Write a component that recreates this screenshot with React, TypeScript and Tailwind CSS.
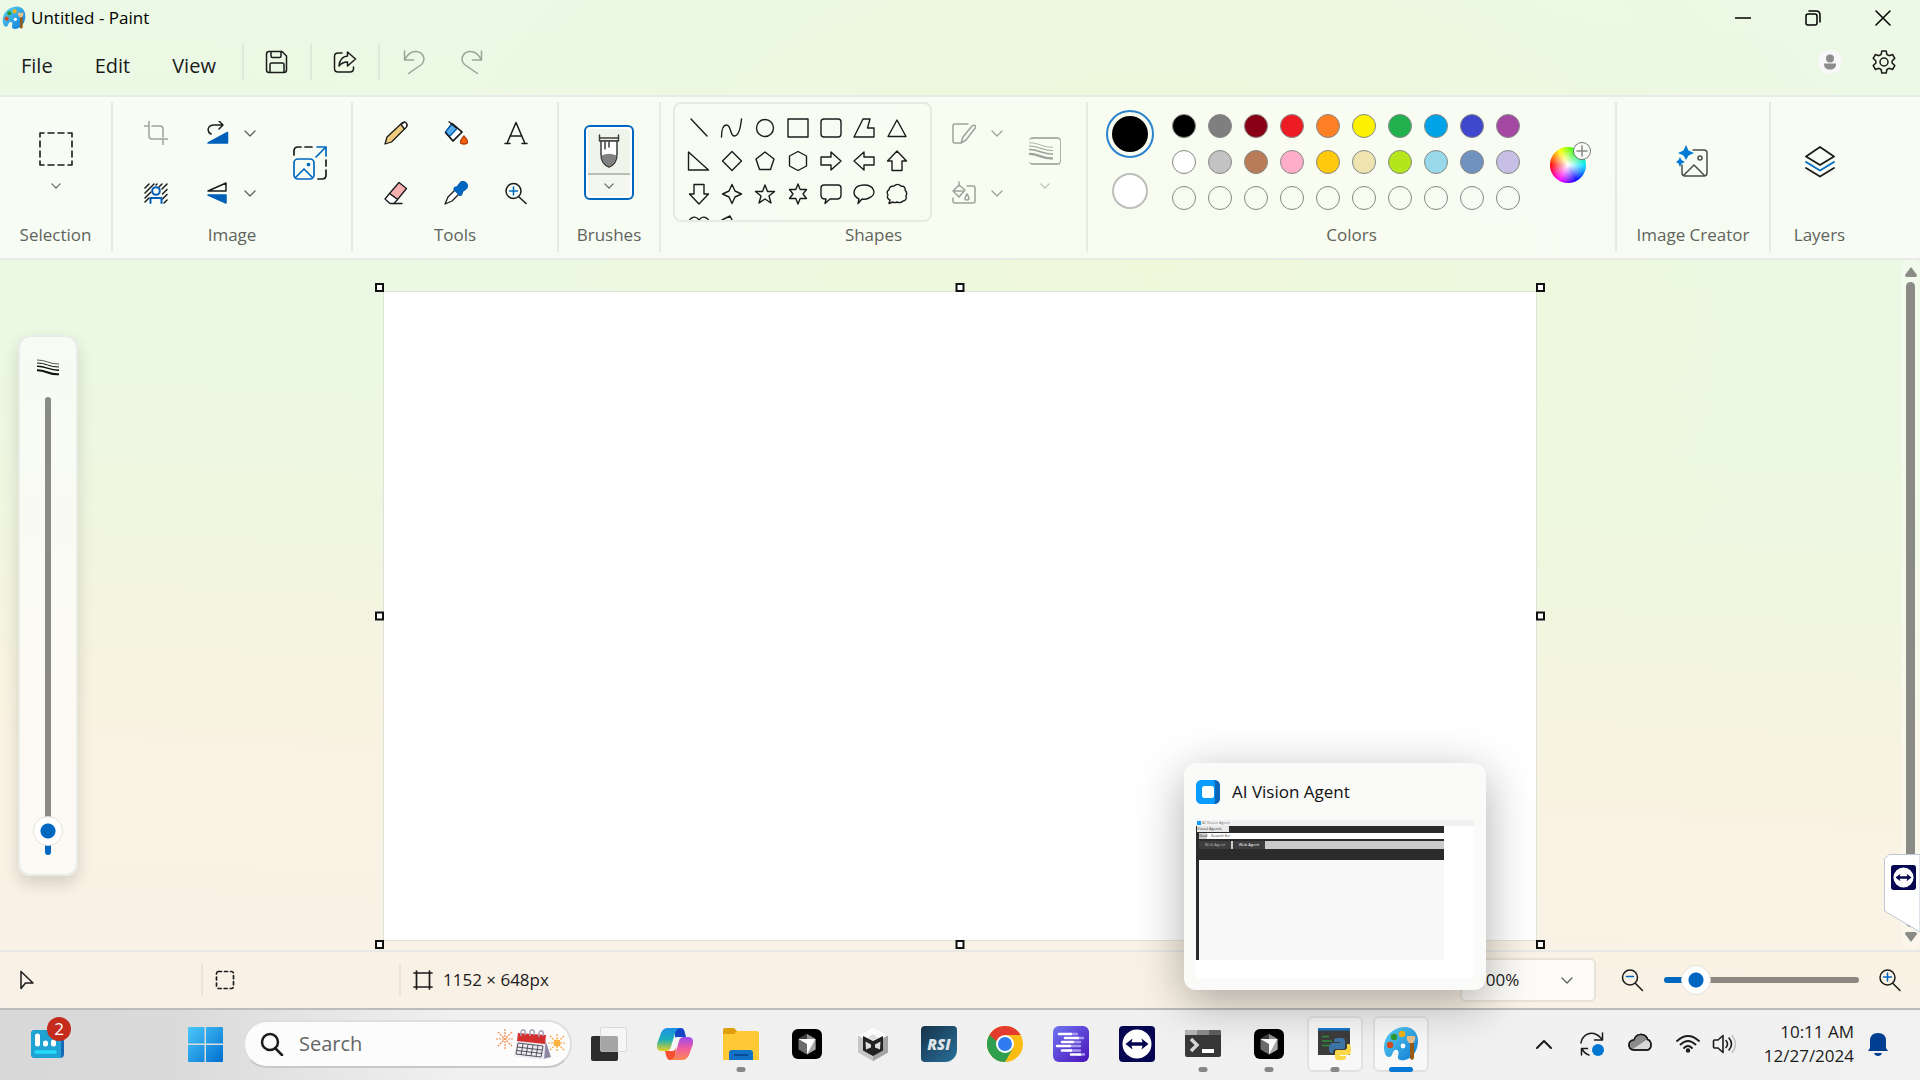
import type { ReactNode } from "react";

type IconProps = { children: ReactNode; box?: string; className?: string; stroke?: string; sw?: number };

function Svg({ children, box = "0 0 24 24", className = "size-6", stroke = "#1b1b1b", sw = 1.5 }: IconProps) {
  return (
    <svg viewBox={box} className={`shrink-0 ${className}`} fill="none" stroke={stroke} strokeWidth={sw} strokeLinecap="round" strokeLinejoin="round" aria-hidden="true">
      {children}
    </svg>
  );
}

function Chevron({ className = "h-[7px] w-3", stroke = "#5c605a" }: { className?: string; stroke?: string }) {
  return (
    <Svg box="0 0 12 7" className={className} stroke={stroke} sw={1.3}>
      <path d="M1 1l5 5 5-5" />
    </Svg>
  );
}

function PaintLogo({ className }: { className: string }) {
  return (
    <svg viewBox="0 0 36 36" className={`shrink-0 ${className}`} aria-hidden="true">
      <defs>
        <linearGradient id="pal" x1="0" y1="0" x2="1" y2="1">
          <stop offset="0" stopColor="#5fd6f5" />
          <stop offset="1" stopColor="#0a78d4" />
        </linearGradient>
      </defs>
      <path fill="url(#pal)" d="M20 1C9 2 1 11 1 21c0 6 2 10 5 10 4 0 3-6 6-7 4-1 4 3 3 6-1 4 3 5 7 4 8-2 13-10 13-19C35 6 29 0 20 1z" />
      <circle cx="7" cy="19" r="3.2" fill="#d64a1f" />
      <circle cx="11" cy="11" r="3.2" fill="#2f9b2f" />
      <circle cx="19" cy="8" r="3.2" fill="#f0b414" />
      <circle cx="20" cy="20" r="2.4" fill="#fff" />
      <path d="M27 17h4v15q-2 4-4 0z" fill="#9a5a14" />
      <path d="M24 10h8q1 4-2 7h-4q-3-3-2-7z" fill="#e8c08c" />
    </svg>
  );
}

function TeamViewerLogo({ className }: { className: string }) {
  return (
    <svg viewBox="0 0 36 36" className={`shrink-0 ${className}`} aria-hidden="true">
      <rect width="36" height="36" rx="4" fill="#06054f" />
      <circle cx="18" cy="18" r="14.5" fill="#fff" />
      <path fill="#06054f" d="M6.500 18l7-5.500-1 3.700h11l-1-3.700 7 5.500-7 5.500 1-3.700h-11l1 3.700z" />
    </svg>
  );
}

function StrokesIcon({ className, stroke }: { className: string; stroke: string }) {
  return (
    <svg viewBox="0 0 22 17" className={`shrink-0 ${className}`} fill="none" stroke={stroke} aria-hidden="true">
      <path strokeWidth="0.7" d="M0 1c8-.5 13 4.500 22 4" />
      <path strokeWidth="1" d="M0 4c8-.5 13 4.500 22 4" />
      <path strokeWidth="1.500" d="M0 7.200c8-.5 13 4.500 22 4" />
      <path strokeWidth="2.100" d="M0 11.200c8-.5 13 5 22 4" />
    </svg>
  );
}

function Group({ label, width, children, last }: { label: string; width: string; children: ReactNode; last?: boolean }) {
  return (
    <section aria-label={label} className={`flex h-[150px] shrink-0 flex-col ${width} ${last ? "" : "border-r-2 border-[#e7ebe3]"}`}>
      <div className="h-[121px]">{children}</div>
      <h2 className="text-center text-[17px] leading-6 whitespace-nowrap text-[#5f635c]">{label}</h2>
    </section>
  );
}

function Tool({ label, children, className = "" }: { label: string; children: ReactNode; className?: string }) {
  return (
    <button type="button" aria-label={label} className={`flex items-center justify-center ${className}`}>
      {children}
    </button>
  );
}

const shapes: [string, ReactNode][] = [
  ["Line", <path d="M4 3l16 17" />],
  ["Curve", <path d="M1.500 21c0-8 2-12 5-12 5 0 3 11 8 11 4 0 6-8 7-17" />],
  ["Oval", <circle cx="12" cy="12" r="8.500" />],
  ["Rectangle", <path d="M2 3h20v18H2z" />],
  ["Rounded rectangle", <rect x="2" y="3" width="20" height="18" rx="3" />],
  ["Polygon", <path d="M11 3h7l-2.500 9H22v9H2z" />],
  ["Triangle", <path d="M12 4l9 16.500H3z" />],
  ["Right triangle", <path d="M1.500 3v18h20z" />],
  ["Diamond", <path d="M12 2.500l9.500 9.500-9.500 9.500L2.500 12z" />],
  ["Pentagon", <path d="M12 3l9 7-3.500 10.500h-11L3 10z" />],
  ["Hexagon", <path d="M12 2.500l8.500 4.500v10L12 21.500 3.500 17V7z" />],
  ["Right arrow", <path d="M2 8h10V3l10 9-10 9v-5H2z" />],
  ["Left arrow", <path d="M22 8H12V3L2 12l10 9v-5h10z" />],
  ["Up arrow", <path d="M12 2l9.500 10H17v9.500H7V12H2.500z" />],
  ["Down arrow", <path d="M12 22l9.500-10H17V2.500H7V12H2.500z" />],
  ["Four-point star", <path d="M12 2.500l3 6.500 6.500 3-6.500 3-3 6.500L9 15l-6.500-3L9 9z" />],
  ["Five-point star", <path d="M12 3l2.500 6.500h7L16 14l2 7-6-4-6 4 2-7-5.500-4.500h7z" />],
  ["Six-point star", <path d="M12 2l2.200 5.500h6.300L17 12l3.500 4.500h-6.300L12 22l-2.200-5.500H3.500L7 12 3.500 7.500h6.300z" />],
  ["Rounded callout", <path d="M5 3h14q3 0 3 3v7q0 4-4 4h-7l-5 4.500 1-4.500H6q-4 0-4-4V6q0-3 3-3z" />],
  ["Oval callout", <path d="M7 17c-8-4-6-14 5-14s13 10 5 13c-2 1-5 1.500-7 1l-4 4.500z" />],
  ["Cloud callout", <path d="M5 18c-3-1-3-4-2-5-2-3 0-5 1-5 0-4 4-4 5-4 2-2 5-2 7 0 3 0 5 2 4 4 2 2 2 4 1 6 1 3-1 5-3 5-2 2-4 2-6 1-2 1-3 1-4 0l-4 1.500z" />],
  ["Heart", <path d="M12 21L3 11C-1 4 8-1 12 5c4-6 13-1 9 6z" />],
  ["Lightning", <path d="M2 5l8-4 4 8 7 12L4 9z" />],
];

const palette: [string, string][] = [
  ["Black", "bg-[#000000]"], ["Gray", "bg-[#7f7f7f]"], ["Dark red", "bg-[#880015]"], ["Red", "bg-[#ed1c24]"], ["Orange", "bg-[#ff7f27]"],
  ["Yellow", "bg-[#fff200]"], ["Green", "bg-[#22b14c]"], ["Turquoise", "bg-[#00a2e8]"], ["Indigo", "bg-[#3f48cc]"], ["Purple", "bg-[#a349a4]"],
  ["White", "bg-[#ffffff]"], ["Light gray", "bg-[#c3c3c3]"], ["Brown", "bg-[#b97a57]"], ["Rose", "bg-[#ffaec9]"], ["Gold", "bg-[#ffc90e]"],
  ["Light yellow", "bg-[#efe4b0]"], ["Lime", "bg-[#b5e61d]"], ["Light turquoise", "bg-[#99d9ea]"], ["Blue-gray", "bg-[#7092be]"], ["Lavender", "bg-[#c8bfe7]"],
  ...Array.from({ length: 10 }, (_, i): [string, string] => [`Custom color ${i + 1}`, "bg-transparent"]),
];

function TitleBar() {
  return (
    <header className="flex h-9 items-center pb-px">
      <PaintLogo className="ml-[2px] size-6" />
      <h1 className="ml-[5px] text-[17px] leading-6 text-black">Untitled - Paint</h1>
      <div className="mr-[29px] ml-auto flex items-center gap-[54px]">
        <Tool label="Minimize"><Svg box="0 0 16 16" className="size-4" stroke="#000"><path d="M0 8h16" /></Svg></Tool>
        <Tool label="Restore">
          <Svg box="0 0 16 16" className="size-4" stroke="#000"><rect x="1" y="4" width="11" height="11" rx="2" /><path d="M4 1h7q4 0 4 4v7" /></Svg>
        </Tool>
        <Tool label="Close"><Svg box="0 0 16 16" className="size-4" stroke="#000"><path d="M1 1l14 14M15 1L1 15" /></Svg></Tool>
      </div>
    </header>
  );
}

function MenuBar() {
  return (
    <nav aria-label="Menu" className="flex h-[59px] items-center pb-2 text-[20px] text-[#1b1b1b]">
      <div className="ml-[21px] flex w-[221px] gap-[42px] pt-2">
        <button type="button">File</button>
        <button type="button">Edit</button>
        <button type="button">View</button>
      </div>
      <div className="flex h-9 w-[68px] items-center justify-center border-l-2 border-[#dfe8d9]">
        <Tool label="Save">
          <Svg><path d="M4 1.500h13l4.500 4.500v14q0 2.500-2.500 2.500H4Q1.500 22.500 1.500 20V4Q1.500 1.500 4 1.500z" /><path d="M6 2v4q0 1.500 1.500 1.500h7Q16 7.500 16 6V2M5 22v-7.500q0-1.500 1.500-1.500h11q1.500 0 1.500 1.500V22" /></Svg>
        </Tool>
      </div>
      <div className="flex h-9 w-[68px] items-center justify-center border-l-2 border-[#dfe8d9]">
        <Tool label="Share">
          <Svg><path d="M9 3H5Q1.500 3 1.500 6.500v12Q1.500 22 5 22h12q3.500 0 3.500-3.500V17" /><path d="M14.500 2l8 7-8 7v-4C10 12 8 13.500 6 16c.5-6 3.500-9.500 8.500-10z" /></Svg>
        </Tool>
      </div>
      <div className="flex h-9 items-center gap-[34px] border-l-2 border-[#dfe8d9] pl-[22px]">
        <Tool label="Undo"><Svg stroke="#9ba596"><path d="M2.500 1v9h9M2.500 10c3-5 6-9 12-8.500C22 2.500 24 10 19.500 14.500L6.500 23.500" /></Svg></Tool>
        <Tool label="Redo"><Svg stroke="#9ba596"><path d="M21.500 1v9h-9M21.500 10c-3-5-6-9-12-8.500C2 2.500 0 10 4.500 14.500L17.500 23.500" /></Svg></Tool>
      </div>
      <div className="mr-6 ml-auto flex items-center gap-[30px]">
        <button type="button" aria-label="Account" className="size-6 rounded-full bg-[#f8f8f8]">
          <svg viewBox="0 0 24 24" className="size-6" fill="#8c8c8c" aria-hidden="true"><circle cx="12" cy="8.500" r="4" /><path d="M6 13.500h12c0 4-2 6-6 6s-6-2-6-6z" /></svg>
        </button>
        <Tool label="Settings">
          <Svg><circle cx="12" cy="12" r="4" /><path d="M9.800 1h4.400l.7 3.500 2.200 1.200 3.400-1.200 2.300 3.900L20.100 11v2l2.700 2.600-2.300 3.900-3.400-1.200-2.200 1.200-.7 3.500H9.800l-.7-3.500-2.200-1.200-3.400 1.200-2.300-3.900L3.900 13v-2L1.200 8.400l2.300-3.900 3.400 1.200 2.200-1.200z" /></Svg>
        </Tool>
      </div>
    </nav>
  );
}

function Ribbon() {
  return (
    <div role="toolbar" aria-label="Ribbon" className="flex h-[165px] items-start border-y-2 border-[#eaeae9] bg-white/60 pt-[5px]">
      <Group label="Selection" width="w-[113px]">
        <button type="button" aria-label="Selection tool" className="flex w-full flex-col items-center gap-[17px] pt-[30px]">
          <Svg box="0 0 34 34" className="size-[34px]" sw={1.6}><path d="M1 5V1h4M29 1h4v4M33 29v4h-4M5 33H1v-4M9 1h6M19 1h6M9 33h6M19 33h6M1 9v6M1 19v6M33 9v6M33 19v6" /></Svg>
          <Chevron className="h-[6px] w-[10px]" />
        </button>
      </Group>

      <Group label="Image" width="w-[240px]">
        <div className="grid grid-cols-[60px_90px_68px] grid-rows-[60px_60px] pt-px pl-[13px]">
          <Tool label="Crop"><Svg stroke="#9da39a"><path d="M5 0v15q0 3 3 3h16M0 5h5M8 5h8q3 0 3 3v8M19 19v5" /></Svg></Tool>
          <div className="flex items-center justify-center gap-[14px]">
            <Tool label="Rotate"><Svg><path d="M21.500 11.500V22H2z" fill="#0060b8" stroke="#0060b8" /><path d="M5 13C0 10 2 4 8 4h9M13 0l4 4-4 4" /></Svg></Tool>
            <Tool label="Rotate options"><Chevron /></Tool>
          </div>
          <Tool label="Resize" className="row-span-2">
            <Svg box="0 0 34 34" className="size-[34px]" sw={1.7}>
              <path d="M1 9V5q0-4 4-4h3M12 1h7M33 14v6M33 24v5q0 4-4 4h-4" />
              <g stroke="#0067c0"><path d="M24 1h9v9M33 1L23 11" /><rect x="1" y="13" width="20" height="20" rx="4" /><path d="M3 31l8-8 8 8" /><circle cx="15.500" cy="18.500" r="1" fill="#0067c0" /></g>
            </Svg>
          </Tool>
          <Tool label="Remove background">
            <Svg sw={1.5}><path d="M1 7l4-4M1 12l9-9M1 17l6-6M1 21l4-4M12 4l1-1M15 6l3-3M18 8l5-5M18.500 13l4.500-4.500M18.500 18l4.500-4.500M20 22l3-3" /><g stroke="#0060b8" strokeWidth="2"><circle cx="12" cy="10" r="3.800" /><path d="M6.500 22v-5h11v5" /></g></Svg>
          </Tool>
          <div className="flex items-center justify-center gap-[14px]">
            <Tool label="Flip"><Svg><path d="M20 2v8H2z" /><path d="M20 22v-8H2z" fill="#0060b8" stroke="#0060b8" /></Svg></Tool>
            <Tool label="Flip options"><Chevron /></Tool>
          </div>
        </div>
      </Group>

      <Group label="Tools" width="w-[206px]">
        <div className="grid grid-cols-[60px_60px_60px] grid-rows-[60px_60px] pt-px pl-[13px]">
          <Tool label="Pencil"><Svg sw={1.3}><path d="M1 23l2-7L18 2q3-2 4.500.5T21.500 7L7.500 21z" fill="#f0cd7e" /><path d="M17 3.500q4-4 5.500-1T20.500 8z" fill="#fff" /></Svg></Tool>
          <Tool label="Fill"><Svg sw={1.3}><path d="M8 2.500l10 8.500-9 9-7.500-8.500z" fill="#fff" /><path d="M8 3l-6.500 8 4 4.500 8-8.500z" fill="#5aaef0" stroke="#0060b8" /><path d="M5 .8l7 6M8 2.500l10 8.500-9 9-7.500-8.500" /><path d="M20 15q7 8 0 8t0-8z" fill="#f7630c" stroke="#b43c08" /></Svg></Tool>
          <Tool label="Text"><Svg><path d="M3 22.500L12 1.500l9 21M6 15h12M1 22.500h5M18 22.500h5" /></Svg></Tool>
          <Tool label="Eraser"><Svg sw={1.3}><path d="M15 1.500l7.500 6-9 11-8-6z" fill="#f7b0b0" /><path d="M5.500 12.500l8 6-3.500 4H6L1 18z" fill="#fff" /><path d="M10 22.500h8" /></Svg></Tool>
          <Tool label="Color picker"><Svg sw={1.3}><path d="M12 8L4 16 1 23l7-3 8-8z" fill="#fff" /><path d="M10.500 6.500l3-1 3-4q3-2 5.500.5t.5 5.500l-4 3-1 3.500-1.500.5-6-6z" fill="#0067c0" stroke="#0060b8" /></Svg></Tool>
          <Tool label="Magnifier"><Svg><circle cx="9.500" cy="10" r="7.500" /><path d="M15 16l7 6.500" /><path d="M9.500 6v8M5.500 10h8" stroke="#0067c0" /></Svg></Tool>
        </div>
      </Group>

      <Group label="Brushes" width="w-[102px]">
        <div className="flex justify-center pt-[23px]">
          <button type="button" aria-label="Brushes" className="flex h-[75px] w-[50px] flex-col items-center rounded-md border-2 border-[#0067c0] bg-white p-[2px]">
            <span className="flex h-[46px] w-full items-center justify-center rounded-t-sm border-b-2 border-[#b9bdb6] bg-[#f0f5ec]">
              <Svg box="0 0 22 34" className="h-[34px] w-[22px]" stroke="#3c3c3c"><path d="M1.500 1v6h19V1M1.500 4h19" /><path d="M3 7v13c0 6 3 11 8 13 5-2 8-7 8-13V7z" fill="#fff" /><path d="M3.500 21.500q7.500-3.500 15 0-1 8-7.500 11-6.500-3-7.500-11z" fill="#808080" stroke="none" /><path d="M7 8v7M11 8v5" /></Svg>
            </span>
            <span className="flex w-full flex-1 items-center justify-center rounded-b-sm bg-[#f3f7f0]"><Chevron className="h-[6px] w-[10px]" /></span>
          </button>
        </div>
      </Group>

      <Group label="Shapes" width="w-[427px]">
        <div className="flex pl-3">
          <div className="grid h-[120px] w-[259px] grid-cols-[repeat(7,33px)] auto-rows-[33px] overflow-hidden rounded-lg border-2 border-[#e7ebe2] pt-[7px] pl-[7px]">
            {shapes.map(([name, d]) => (
              <Tool key={name} label={name}><Svg className="size-6" sw={1.4}>{d}</Svg></Tool>
            ))}
          </div>
          <div className="ml-5 grid grid-rows-[60px_60px] pt-px">
            <div className="flex items-center gap-[15px]">
              <Tool label="Shape outline"><Svg stroke="#9da39a"><path d="M16 3H3Q1 3 1 5v15q0 2 2 2h5M9 22l2-6L20 5q3-2 4 1l-10 13z" /></Svg></Tool>
              <Tool label="Shape outline options"><Chevron stroke="#9da39a" /></Tool>
            </div>
            <div className="flex items-center gap-[15px]">
              <Tool label="Shape fill"><Svg stroke="#9da39a"><path d="M15 5h6q2 0 2 2v13q0 2-2 2H3q-2 0-2-2v-3M7 1v4M7 4l6 5-6 7-6-6zM1 10h11M15 13q4 6 0 6t0-6z" /></Svg></Tool>
              <Tool label="Shape fill options"><Chevron stroke="#9da39a" /></Tool>
            </div>
          </div>
          <button type="button" aria-label="Size" className="ml-[26px] flex h-[94px] flex-col items-center gap-[18px] pt-[35px]">
            <span className="flex h-7 w-8 items-center rounded-sm border-t-2 border-r-1 border-b-2 border-[#aeb3aa]"><StrokesIcon className="h-5 w-6" stroke="#9da39a" /></span>
            <Chevron className="h-[6px] w-[10px]" stroke="#b6bcb2" />
          </button>
        </div>
      </Group>

      <Group label="Colors" width="w-[529px]">
        <div className="flex pl-[18px]">
          <div className="flex w-12 flex-col items-center gap-[15px] pt-2">
            <button type="button" aria-label="Color 1, black" className="flex size-12 items-center justify-center rounded-full border-2 border-[#2b83cf]"><span className="size-9 rounded-full bg-black" /></button>
            <button type="button" aria-label="Color 2, white" className="size-9 rounded-full border-2 border-[#bcbfba] bg-white" />
          </div>
          <div className="ml-[18px] grid grid-cols-[repeat(10,24px)] gap-3 pt-3">
            {palette.map(([name, bg]) => (
              <button key={name} type="button" aria-label={name} className={`size-6 rounded-full border border-[#858985] ${bg}`} />
            ))}
          </div>
          <button type="button" aria-label="Edit colors" className="relative mt-[45px] ml-[30px] size-9 rounded-full bg-[radial-gradient(circle,#fff_0%,transparent_70%),conic-gradient(from_90deg,#00e5ff,#0000ff,#ff00ff,#ff0000,#ffff00,#00ff00,#00e5ff)]">
            <span className="absolute -top-[5px] -right-[5px] flex size-[18px] items-center justify-center rounded-full border border-[#777] bg-[#f9fcf6]">
              <Svg box="0 0 12 12" className="size-3" stroke="#888"><path d="M6 1v10M1 6h10" /></Svg>
            </span>
          </button>
        </div>
      </Group>

      <Group label="Image Creator" width="w-[154px]">
        <div className="flex h-full items-center justify-center pr-[2px] pb-1">
          <Tool label="Open Image Creator">
            <Svg box="0 0 32 32" className="size-8" stroke="#4a4d48"><path d="M17 5h11q3 0 3 3v20q0 3-3 3H9q-3 0-3-3v-8M8 30l10-10 10 10" /><circle cx="24" cy="13" r="2" /><path fill="#0078d4" stroke="none" d="M10 0l2.500 5.500L18 8l-5.500 2.500L10 15l-2.500-4.500L2 8l5.500-2.500zM4 12l1.500 3L9 17l-3.500 1.500L4 22l-1.500-3.500L0 17l2.500-2z" /></Svg>
          </Tool>
        </div>
      </Group>

      <Group label="Layers" width="w-[97px]" last>
        <div className="flex h-full items-center justify-center pb-px">
          <Tool label="Show layers">
            <Svg box="0 0 32 32" className="size-8" sw={1.8}><path d="M16 1l14 9.500L16 19 2 10.500z" /><path d="M2 16l14 8.500L30 16" stroke="#0067c0" /><path d="M2 22l14 8.500L30 22" /></Svg>
          </Tool>
        </div>
      </Group>
    </div>
  );
}

const handles = [
  "-top-[9px] -left-[9px]", "-top-[9px] left-1/2 -translate-x-1/2", "-top-[9px] -right-[9px]",
  "top-1/2 -left-[9px] -translate-y-1/2", "top-1/2 -right-[9px] -translate-y-1/2",
  "-bottom-[9px] -left-[9px]", "-bottom-[9px] left-1/2 -translate-x-1/2", "-right-[9px] -bottom-[9px]",
];

function Workspace() {
  return (
    <main className="relative flex min-h-[690px] flex-1 items-start">
      <div className="absolute top-[75px] left-[18px] flex h-[541px] w-[60px] flex-col items-center rounded-xl border-2 border-[#e9ebe8] bg-white/60 pt-[22px] shadow-[0_8px_16px_rgba(0,0,0,0.14)]">
        <StrokesIcon className="h-[17px] w-[22px]" stroke="#111" />
        <input
          type="range" aria-label="Brush size" min={0} max={100} defaultValue={2}
          className="mt-[21px] h-[458px] w-[30px] appearance-none bg-transparent [direction:rtl] [writing-mode:vertical-lr] [&::-webkit-slider-runnable-track]:h-full [&::-webkit-slider-runnable-track]:w-[6px] [&::-webkit-slider-runnable-track]:rounded-full [&::-webkit-slider-runnable-track]:bg-[linear-gradient(to_top,#0067c0_5%,#8a8b85_5%)] [&::-webkit-slider-thumb]:-ml-3 [&::-webkit-slider-thumb]:size-[30px] [&::-webkit-slider-thumb]:appearance-none [&::-webkit-slider-thumb]:rounded-full [&::-webkit-slider-thumb]:border [&::-webkit-slider-thumb]:border-[#e6e2da] [&::-webkit-slider-thumb]:bg-[radial-gradient(circle,#0067c0_7px,#fff_8px)]"
        />
      </div>

      <div className="relative mx-auto mt-8 h-[648px] w-[1152px] bg-white outline-1 outline-[#e0e4d8]">
        {handles.map((pos) => (
          <span key={pos} className={`absolute size-[9px] border-2 border-[#111] bg-white ${pos}`} />
        ))}
      </div>

      <div className="absolute inset-y-0 right-0 flex w-[19px] flex-col items-center rounded-lg bg-white/30 pt-[7px] pb-2">
        <svg viewBox="0 0 12 10" className="h-[10px] w-3" fill="#8a8a86" aria-hidden="true"><path d="M6 0l6 8q0 2-2 2H2Q0 10 0 8z" /></svg>
        <span className="my-[5px] w-[9px] flex-1 rounded-full bg-[#8a8a86]" />
        <svg viewBox="0 0 12 10" className="h-[10px] w-3" fill="#8a8a86" aria-hidden="true"><path d="M6 10L0 2Q0 0 2 0h8q2 0 2 2z" /></svg>
      </div>
      <button type="button" aria-label="TeamViewer panel" className="absolute right-0 bottom-[18px] h-[78px] w-9">
        <svg viewBox="0 0 36 78" className="absolute inset-0 h-full w-full" aria-hidden="true"><path d="M36 .5H5L.5 5v52L36 78z" fill="#fff" stroke="#bcc8d8" /></svg>
        <TeamViewerLogo className="absolute top-[11px] left-[7px] size-[25px]" />
      </button>
    </main>
  );
}

function StatusBar() {
  return (
    <footer className="flex h-[58px] items-center border-t-2 border-[#e9e8e8] text-[17px] leading-6 text-[#1b1b1b]">
      <div className="flex w-[201px] items-center pl-[18px]">
        <Svg box="0 0 18 20" className="h-5 w-[18px]"><path d="M3 1.500v17l4.500-5.500H15z" /></Svg>
      </div>
      <div className="flex h-8 w-[198px] items-center border-l-2 border-[#ece4da] pl-3">
        <Svg box="0 0 20 20" className="size-5" sw={1.7}><rect x="1.500" y="1.500" width="17" height="17" rx="2" strokeDasharray="3 3" /></Svg>
      </div>
      <div className="flex h-8 items-center gap-[10px] border-l-2 border-[#ece4da] pl-3">
        <Svg box="0 0 20 20" className="size-5" sw={1.7}><path d="M3.500 1v18M16.500 1v18M1 3h18M1 17h18" /></Svg>
        <span>1152 × 648px</span>
      </div>
      <div className="mr-[18px] ml-auto flex items-center">
        <div className="relative">
          <select aria-label="Zoom level" defaultValue="100%" className="h-[44px] w-[136px] appearance-none rounded-md border-2 border-[#e8e2d9] bg-[#fdfbf8] pl-[14px] text-[17px]">
            <option>50%</option>
            <option>100%</option>
            <option>200%</option>
          </select>
          <span className="pointer-events-none absolute top-[19px] right-[23px]"><Chevron /></span>
        </div>
        <Tool label="Zoom out" className="ml-6"><Svg><circle cx="10" cy="9.500" r="7.500" /><path d="M15.500 15.500l7 7" /><path d="M6.500 8.500h7" stroke="#0067c0" /></Svg></Tool>
        <input
          type="range" aria-label="Zoom" min={0} max={100} defaultValue={10}
          className="mr-[19px] ml-5 h-[30px] w-[195px] appearance-none bg-transparent [&::-webkit-slider-runnable-track]:h-[6px] [&::-webkit-slider-runnable-track]:rounded-full [&::-webkit-slider-runnable-track]:bg-[linear-gradient(to_right,#0067c0_15%,#8a8780_15%)] [&::-webkit-slider-thumb]:-mt-3 [&::-webkit-slider-thumb]:size-[30px] [&::-webkit-slider-thumb]:appearance-none [&::-webkit-slider-thumb]:rounded-full [&::-webkit-slider-thumb]:border [&::-webkit-slider-thumb]:border-[#e6e0d8] [&::-webkit-slider-thumb]:bg-[radial-gradient(circle,#0067c0_7px,#fff_8px)]"
        />
        <Tool label="Zoom in"><Svg><circle cx="9.500" cy="9.500" r="7.500" /><path d="M15 15.500l7 7" /><path d="M9.500 5v8M5.500 9h8" stroke="#0067c0" /></Svg></Tool>
      </div>
    </footer>
  );
}

function CursorCube() {
  return (
    <svg viewBox="0 0 36 36" className="size-9" aria-hidden="true">
      <rect x="3" y="3" width="30" height="30" rx="6" fill="#000" />
      <path d="M18 8l8.500 5v10.500L18 28.500l-8.500-5V13z" fill="#6c6c6c" />
      <path d="M18 8l8.500 5h-17z" fill="#8f8f8f" />
      <path d="M18 8v5H9.500z" fill="#3c3c3c" />
      <path d="M26.500 13v10.500L18 28.500z" fill="#a8a8a8" />
      <path d="M9.500 13h17L18 28.500V18z" fill="#fff" />
    </svg>
  );
}

const apps: { name: string; running?: boolean; active?: boolean; icon: ReactNode }[] = [
  {
    name: "Task view",
    icon: <svg viewBox="0 0 36 36" className="size-9" aria-hidden="true"><rect y="10" width="27" height="25" rx="2" fill="#2d2d2d" /><rect x="9.500" y="1.500" width="26" height="24" rx="1.500" fill="#f6f6f6" stroke="#cfcfcf" strokeWidth=".7" /><path d="M9.500 10H25q2 0 2 2v13.500H11q-1.500 0-1.500-1.500z" fill="#a6a6a6" /></svg>,
  },
  {
    name: "Copilot",
    icon: (
      <svg viewBox="0 0 36 36" className="size-9" aria-hidden="true">
        <defs>
          <linearGradient id="cpa" x1="0" y1="0" x2="0" y2="1"><stop offset="0" stopColor="#1c8fe8" /><stop offset=".5" stopColor="#1cb0b8" /><stop offset="1" stopColor="#e8d020" /></linearGradient>
          <linearGradient id="cpb" x1="0" y1="0" x2="0" y2="1"><stop offset="0" stopColor="#9a4cf0" /><stop offset=".5" stopColor="#f05c9c" /><stop offset="1" stopColor="#fa8a50" /></linearGradient>
        </defs>
        <path d="M18 2h6q3 0 4 5l1 4h-6q-4 0-5 4z" fill="#1546c8" />
        <path d="M18 34h-5q-3 0-4-5l-1-4h6q4 0 5-4z" fill="#f5502f" />
        <path d="M11 2h12q-4 1-5 5l-4 14q-1 4-5 4H5q-6 0-5-7L4 7q2-5 7-5z" fill="url(#cpa)" />
        <path d="M25 34H13q4-1 5-5l4-14q1-4 5-4h4q6 0 5 7l-4 11q-2 5-7 5z" fill="url(#cpb)" />
        <path d="M22 11h-2q-3 0-4 4l-3 10h2q3 0 4-4z" fill="#f6f6f8" />
      </svg>
    ),
  },
  {
    name: "File Explorer", running: true,
    icon: <svg viewBox="0 0 36 36" className="size-9" aria-hidden="true"><path d="M0 4q0-2 2-2h9l4 4v8H0z" fill="#e0a00c" /><path d="M0 8h11l3-3h20q2 0 2 2v27H0z" fill="#fdc935" /><path d="M6 34V27q0-3 3-3h18q3 0 3 3v7z" fill="#1272c8" /><path d="M11 29h14" stroke="#0a4a94" strokeWidth="2" /></svg>,
  },
  { name: "Cursor", icon: <CursorCube /> },
  {
    name: "Unity Hub",
    icon: <svg viewBox="0 0 36 36" className="size-9" aria-hidden="true"><path d="M18 1l15 8.500v17L18 35 3 26.500v-17z" fill="#c6c6c6" /><path d="M18 1l15 8.500L18 18 3 9.500z" fill="#fbfbfb" /><path d="M18 18l15-8.500v17L18 35z" fill="#a4a4a4" /><path d="M18 15l10-5v14.500L18 30 8 24.500V10z" fill="#222" /><path d="M18 8l5 3.500-5 3-5-3zM10.500 15.500l5.500 3v3l-5 2zM25.500 15.500l-5.500 3v3l5 2z" fill="#dedede" /></svg>,
  },
  {
    name: "RSI Launcher",
    icon: <span className="flex size-9 items-center justify-center rounded-sm rounded-br-xl bg-linear-to-br from-[#17344a] to-[#27709c] text-[15px] leading-4 font-extrabold text-[#dfe3e6] italic">RSI</span>,
  },
  {
    name: "Chrome",
    icon: <svg viewBox="0 0 36 36" className="size-9" aria-hidden="true"><circle cx="18" cy="18" r="18" fill="#fbbc16" /><path d="M18 18V9h15.600A18 18 0 0 0 2.400 9l7.800 13.500z" fill="#e33b2e" /><path d="M2.400 9A18 18 0 0 0 18 36l7.800-13.500H18z" fill="#2f9e4f" /><circle cx="18" cy="18" r="9" fill="#fff" /><circle cx="18" cy="18" r="7" fill="#2f7cf0" /></svg>,
  },
  {
    name: "Speech editor",
    icon: (
      <svg viewBox="0 0 36 36" className="size-9" aria-hidden="true">
        <defs><linearGradient id="pur" x1="0" y1="0" x2="1" y2="1"><stop offset="0" stopColor="#6f74f2" /><stop offset="1" stopColor="#4a12b8" /></linearGradient></defs>
        <rect width="36" height="36" rx="6" fill="url(#pur)" />
        <path d="M16 8h8M22 12h8M18 16h9M15 20h12M15 24.500h12M26 28.500h5" stroke="#a79bf0" strokeWidth="2.400" strokeLinecap="round" />
        <path d="M6 8h12M12 12h13M9 16h11M4 20h13M9 24.500h9M18 28.500h9" stroke="#fff" strokeWidth="2.600" strokeLinecap="round" />
      </svg>
    ),
  },
  { name: "TeamViewer", icon: <TeamViewerLogo className="size-9" /> },
  {
    name: "Terminal", running: true,
    icon: <svg viewBox="0 0 36 36" className="size-9" aria-hidden="true"><rect y="4" width="36" height="27" rx="2" fill="#383838" /><path d="M0 9V6q0-2 2-2h10v5z" fill="#b5b5b5" /><path d="M12 4h12v5H12z" fill="#8c8c8c" /><path d="M24 4h10q2 0 2 2v3H24z" fill="#5f5f5f" /><path d="M6 13l6 6-6 6" fill="none" stroke="#d6d6d6" strokeWidth="3.500" /><path d="M17 25h12" stroke="#fff" strokeWidth="4" /></svg>,
  },
  { name: "Cursor window", running: true, icon: <CursorCube /> },
  {
    name: "Python", running: true, active: true,
    icon: (
      <svg viewBox="0 0 36 36" className="size-9" aria-hidden="true">
        <path d="M1 2h32v27H1z" fill="#3c3c3c" /><path d="M1 2h32v2.500H1z" fill="#1478c8" /><path d="M5 10.500h7M5 15h10M5 19.500h8" stroke="#2f8f3a" strokeWidth="1.300" />
        <path d="M22 12q6-1 6 3v6q0 2-2 2h-7q-3 0-3 3v1h-2q-2-1-2-5t3-5h8v-1h-6v-2q0-2 5-2z" fill="#3d75a8" />
        <path d="M24 34q-6 1-6-3v-5q0-2 2-2h7q3 0 3-3v-3h2q2 1 2 6t-3 5h-8v1h6v2q0 2-5 2z" fill="#fbd84a" />
      </svg>
    ),
  },
  { name: "Paint", running: true, active: true, icon: <PaintLogo className="size-9" /> },
];

function WindowPreview() {
  return (
    <div className="absolute bottom-[82px] left-1/2 z-10 h-[227px] w-[302px] -translate-x-1/2 rounded-xl bg-[#fafaf9] px-3 pt-[17px] pb-3 shadow-[0_12px_48px_rgba(0,0,0,0.32)]">
      <div className="flex h-6 items-center gap-3">
        <svg viewBox="0 0 24 24" className="size-6" aria-hidden="true"><rect width="24" height="24" rx="6" fill="#0a9bff" /><path d="M18 0q6 0 6 6v12q0 6-6 6V0z" fill="#0b66b8" /><path d="M6 0h10q3 0 3 4v16q0 4-3 4H6q-6 0-6-6V6q0-6 6-6z" fill="#0a9bff" /><rect x="6" y="6" width="12" height="12" rx="2.500" fill="#fff" /></svg>
        <span className="text-[17px] leading-6 text-[#111]">AI Vision Agent</span>
      </div>
      <div className="mt-4 h-[158px] overflow-hidden bg-white text-[4px] leading-[6px]">
        <div className="flex h-[6px] items-center gap-px bg-[#f1f1f1] text-[#777]"><span className="ml-px size-1 bg-[#0a9bff]" />AI Vision Agent</div>
        <div className="mr-[30px] h-[134px] bg-[#2b2b2b] pl-[3px]">
          <div className="-ml-[2px] h-[6px] w-8 bg-[#e8e8e8] text-[#333]">Visual Agents</div>
          <div className="mt-px flex h-[6px] bg-white text-[#333]"><span className="mr-1 w-2 bg-[#cfcfcf]">Goal</span>Search for</div>
          <div className="mt-[2px] flex h-2 items-center gap-[2px] bg-[#cbcbcb] text-center text-[#bbb]">
            <span className="h-2 w-[32px] bg-[#3d3d3d] leading-2">Web Agent</span>
            <span className="h-2 w-[32px] bg-[#3d3d3d] leading-2 text-white">Web Agent</span>
          </div>
          <div className="mt-[11px] h-[100px] bg-[#f8f8f8]" />
        </div>
      </div>
    </div>
  );
}

function Taskbar() {
  return (
    <div role="navigation" aria-label="Taskbar" className="flex h-[72px] items-center border-t-2 border-[#bcbcbc] bg-[linear-gradient(to_right,#d8d8d8_0%,#dadada_9%,#f0f0f0_24%,#f1f1f1_100%)] pb-[2px] text-[#1b1b1b]">
      <button type="button" aria-label="Widgets, 2 new" className="relative ml-[31px] h-7 w-[34px]">
        <svg viewBox="0 0 34 28" className="h-7 w-[34px]" aria-hidden="true"><rect width="33" height="28" rx="4" fill="#1868b4" /><path d="M4 0h26v28H4q-4 0-4-4V4q0-4 4-4z" fill="#1fa2d4" /><path d="M6.500 6v8M14.500 13v1M22.500 12v2" stroke="#fff" strokeWidth="5" strokeLinecap="round" /><path d="M5 22h19" stroke="#22dcf6" strokeWidth="3.500" strokeLinecap="round" /></svg>
        <span className="absolute -top-[13px] left-4 flex size-6 items-center justify-center rounded-full bg-[#c42b1c] text-[17px] leading-6 text-white">2</span>
      </button>
      <button type="button" aria-label="Start" className="ml-[123px]">
        <svg viewBox="0 0 35 35" className="size-[35px]" aria-hidden="true">
          <defs><linearGradient id="win" gradientUnits="userSpaceOnUse" x1="0" y1="0" x2="35" y2="35"><stop offset="0" stopColor="#4cc8fa" /><stop offset="1" stopColor="#006fd0" /></linearGradient></defs>
          <path fill="url(#win)" d="M0 1q0-1 1-1h15.500v16.500H0zM18 0h16q1 0 1 1v15.500H18zM0 18h16.500v17H1q-1 0-1-1zM18 18h17v16q0 1-1 1H18z" />
        </svg>
      </button>
      <label className="ml-5 flex h-12 w-[329px] items-center rounded-full border-2 border-[#dedede] border-b-[#c8c8c8] bg-[#fcfcfc] pr-1 pl-[15px]">
        <Svg className="size-6" sw={2.5}><circle cx="10" cy="10" r="8" /><path d="M16 17l6 6" /></Svg>
        <input type="search" aria-label="Search" placeholder="Search" className="ml-[15px] w-[190px] bg-transparent text-[20px] leading-6 outline-none placeholder:text-[#666]" />
        <svg viewBox="0 0 70 32" className="ml-auto h-8 w-[70px]" aria-hidden="true">
          <g stroke="#f08a4b" strokeWidth="1.200" strokeDasharray="2 1"><path d="M9 1v20M0 11h18M2 4l14 14M16 4L2 18" /></g>
          <g stroke="#f4a03a" strokeWidth="1.200" strokeDasharray="2 1"><path d="M61 6v18M52 15h18M54 8l14 14M68 8L54 22" /></g>
          <circle cx="61" cy="15" r="3.500" fill="#fbb13c" />
          <path d="M48 8l7 21-8 2z" fill="#8d88a0" />
          <path d="M22 6l28 3-2 23-30-4z" fill="#eceaf4" /><path d="M22 5l28 2-1 9-28-3z" fill="#d42f2f" />
          <g stroke="#444" strokeWidth=".9" fill="none"><path d="M22 15l25 3-2 11-25-3zM21 19l25 3M21 22.500l25 3M27 16l-2 11M32 16.500l-2 11M37 17l-2 11M42 17.500l-2 11" /></g>
          <g stroke="#a9a4b8" strokeWidth="1.500" fill="none"><path d="M25 8q-1-7 3-6 2 1 1 5M34 8q-1-7 3-6 2 1 1 5M43 9q-1-7 3-6 2 1 1 5" /></g>
        </svg>
      </label>
      <div className="ml-[9px] flex gap-[10px]">
        {apps.map((app) => (
          <div key={app.name} className="relative">
            <button type="button" aria-label={app.name} className={`flex h-14 w-14 items-center justify-center rounded-md ${app.active ? "border-2 border-[#e2e2e2] bg-white/50" : ""}`}>
              {app.icon}
            </button>
            {app.running && <span className={`absolute bottom-0 left-1/2 h-[5px] -translate-x-1/2 rounded-full ${app.name === "Paint" ? "w-6 bg-[#0078d4]" : "w-[9px] bg-[#868686]"}`} />}
            {app.name === "Python" && <WindowPreview />}
          </div>
        ))}
      </div>
      <div className="mr-[30px] ml-auto flex items-center">
        <Tool label="Show hidden icons"><Svg box="0 0 16 10" className="h-[10px] w-4" sw={2}><path d="M1 9l7-7 7 7" /></Svg></Tool>
        <Tool label="Update" className="ml-7"><Svg><path d="M1 11C2 4 8 0 14 1.500q5 1.500 8 6M22.500 1v7h-8M9 23q-4-1-7-6M1.500 23v-6.500h6" /><circle cx="18" cy="18" r="6" fill="#0078d4" stroke="none" /></Svg></Tool>
        <Tool label="OneDrive" className="ml-6 pb-1"><Svg><path d="M6 20q-5-.5-5-5t5-5q2-6 7.500-5.500 5 .5 6 5Q23 10.500 23 15t-4 5z" fill="#d9d9d9" /><path d="M2 17q-1-6 4-7 2-6 7.500-5.500 4 .5 5.500 5L5 19z" fill="#8c8c8c" stroke="none" /><path d="M6 20q-5-.5-5-5t5-5q2-6 7.500-5.500 5 .5 6 5Q23 10.500 23 15t-4 5z" /></Svg></Tool>
        <button type="button" aria-label="Network and volume" className="ml-6 flex gap-3">
          <Svg sw={1.8}><path d="M1 9q11-10 22 0M4.500 12.500q7.500-7 15 0M8 16q4-4 8 0" /><circle cx="12" cy="18.500" r="1.300" fill="#1b1b1b" /></Svg>
          <Svg sw={1.6}><path d="M1.500 9v6q0 1 1 1H6l5 4.500V3.500L6 8H2.500q-1 0-1 1zM14 8.500q3 3.500 0 7M17 6q5 6 0 12" /><path d="M20 3.500q7 8.500 0 17" stroke="#c4c4c4" /></Svg>
        </button>
        <button type="button" aria-label="Clock" className="ml-6 flex w-[94px] flex-col items-end text-[17px] leading-6 whitespace-nowrap">
          <span>10:11 AM</span>
          <span>12/27/2024</span>
        </button>
        <Tool label="Notifications" className="ml-3">
          <svg viewBox="0 0 24 24" className="size-6" fill="#003e92" aria-hidden="true"><path d="M12 1q8 0 8 8v7l2 3H2l2-3V9q0-8 8-8zM8 21h8q-1 3-4 3t-4-3z" /></svg>
        </Tool>
      </div>
    </div>
  );
}

export default function App() {
  return (
    <div className="flex min-h-screen flex-col overflow-hidden bg-[#f1f1f1] font-['Open_Sans',sans-serif]">
      <div className="flex flex-1 flex-col bg-[radial-gradient(ellipse_at_60%_25%,rgba(240,247,212,0.7)_0%,transparent_45%),linear-gradient(183deg,#ebf9e6_0%,#ebf8e2_42%,#f2f5df_60%,#faf2e2_76%,#f9f1e7_100%)]">
        <TitleBar />
        <MenuBar />
        <Ribbon />
        <Workspace />
        <StatusBar />
      </div>
      <Taskbar />
    </div>
  );
}
